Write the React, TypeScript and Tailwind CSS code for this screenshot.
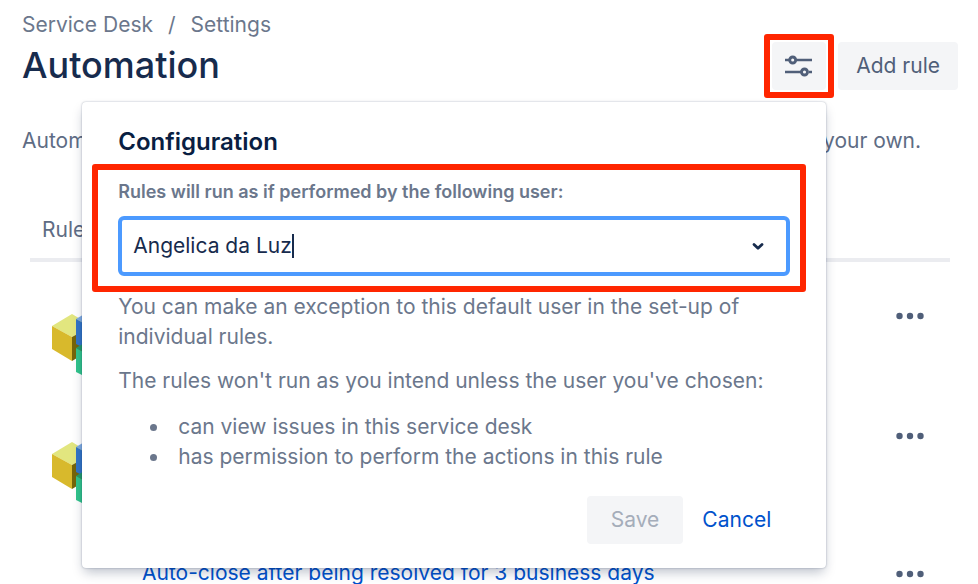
import { useState } from 'react';
import { clsx } from 'clsx';

interface Rule {
  name: string;
  iconCell: string;
  menuCell: string;
}

const rules: Rule[] = [
  { name: 'Transition on comment', iconCell: 'h-32 pt-11', menuCell: 'pt-10' },
  { name: 'Re-open on customer reply', iconCell: 'h-32 pt-[46px]', menuCell: 'pt-[34px]' },
  { name: 'Auto-close after being resolved for 3 business days', iconCell: 'h-32 pt-20', menuCell: 'pt-11' },
];

const CubesIcon = () => (
  <svg width="66" height="76" viewBox="0 0 66 76" aria-hidden="true">
    <path d="M0 20 20 8 40 20 20 31Z" fill="#e2e67f" />
    <path d="M0 20 20 31V55L0 43Z" fill="#d8b92c" />
    <path d="M20 31 40 20V43L20 55Z" fill="#75650b" />
    <path d="M24 13 44 1 64 13 44 24Z" fill="#7eabe3" />
    <path d="M24 13 44 24V48L24 38Z" fill="#3274c6" />
    <path d="M44 24 64 13V37L44 48Z" fill="#164a8e" />
    <path d="M24 42 34 36 44 48 44 53Z" fill="#229a6c" />
    <path d="M24 42 44 53V76L24 66Z" fill="#31c48b" />
    <path d="M44 53 64 42V66L44 76Z" fill="#17764f" />
  </svg>
);

const SlidersIcon = () => (
  <svg width="28" height="22" viewBox="0 0 28 22" fill="none" stroke="currentColor" aria-hidden="true">
    <path d="M0 5H4M12 5H27M0 17H16M24 17H27" strokeWidth="2.6" />
    <circle cx="7.7" cy="5" r="3" strokeWidth="2.9" />
    <circle cx="19.5" cy="17" r="3" strokeWidth="2.9" />
  </svg>
);

const MoreIcon = () => (
  <svg width="28" height="8" viewBox="0 0 28 8" fill="currentColor" aria-hidden="true">
    <circle cx="3.5" cy="4" r="3.2" />
    <circle cx="14" cy="4" r="3.2" />
    <circle cx="24.5" cy="4" r="3.2" />
  </svg>
);

const ConfigurationDialog = () => {
  const [user, setUser] = useState('Angelica da Luz');

  return (
    <div
      role="dialog"
      aria-labelledby="config-title"
      className="absolute top-[60px] right-0 z-10 w-[744px] rounded bg-white px-9 py-6 text-[#6b778c] shadow-[0_0_2px_rgba(9,30,66,0.35),0_6px_12px_-2px_rgba(9,30,66,0.28)]"
    >
      <h2 id="config-title" className="text-2xl leading-8 font-semibold text-[#091e42]">
        Configuration
      </h2>
      <div className="mt-[6px] -mr-4 -ml-[26px] rounded-[3px] border-[6px] border-[#ff2600] pt-[10px] pr-[10px] pb-[10px] pl-5">
        <label htmlFor="run-as" className="block text-lg leading-6 font-semibold">
          Rules will run as if performed by the following user:
        </label>
        <div className="mt-3 flex h-[60px] items-center rounded-md border-4 border-[#4c9aff] bg-white pr-5 pl-[11px] text-[#172b4d]">
          <input
            id="run-as"
            value={user}
            onChange={(e) => setUser(e.target.value)}
            className="field-sizing-content bg-transparent outline-none"
          />
          <span className="h-6 w-0.5 bg-[#172b4d]" />
          <button type="button" aria-label="Show users" className="ml-auto">
            <svg width="16" height="16" viewBox="0 0 16 16" fill="none" stroke="currentColor" aria-hidden="true">
              <path d="M4 6.5 8 10.3 12 6.5" strokeWidth="2.8" strokeLinecap="round" strokeLinejoin="round" />
            </svg>
          </button>
        </div>
      </div>
      <p>You can make an exception to this default user in the set-up of individual rules.</p>
      <p className="mt-[14px]">The rules won't run as you intend unless the user you've chosen:</p>
      <ul className="mt-4 list-disc pl-[52px]">
        <li className="pl-2">can view issues in this service desk</li>
        <li className="pl-2">has permission to perform the actions in this rule</li>
      </ul>
      <div className="mt-6 flex justify-end">
        <button type="button" disabled className="h-12 rounded bg-[#f4f5f7] px-6 text-[#a5adba]">
          Save
        </button>
        <button type="button" className="h-12 px-[19px] text-[#0052cc]">
          Cancel
        </button>
      </div>
    </div>
  );
};

export default function App() {
  return (
    <div className="h-screen overflow-hidden bg-white pt-[10px] pr-5 pl-[22px] font-['Inter',sans-serif] text-[21px] leading-[30px] text-[#5e6c84]">
      <header className="flex items-start justify-between">
        <div>
          <nav aria-label="Breadcrumb" className="flex gap-[15px] text-[#6b778c]">
            <a href="#desk">Service Desk</a>
            <span>/</span>
            <a href="#settings">Settings</a>
          </nav>
          <h1 className="mt-[3px] text-4xl leading-11 font-medium text-[#172b4d]">Automation</h1>
        </div>
        <div className="mt-8 flex gap-3 text-[#505f79]">
          <div className="relative">
            <button
              type="button"
              aria-label="Configuration"
              className="flex h-12 w-[54px] items-center justify-center rounded bg-[#f4f5f7]"
            >
              <SlidersIcon />
            </button>
            <div className="pointer-events-none absolute -inset-2 rounded-[3px] border-[6px] border-[#ff2600]" />
            <ConfigurationDialog />
          </div>
          <button type="button" className="h-12 rounded bg-[#f4f5f7] px-[18px]">
            Add rule
          </button>
        </div>
      </header>

      <p className="mt-9 whitespace-nowrap">
        Automate actions in your service desk. Edit any one of the preset rules or create your own.
      </p>

      <div className="mt-[59px] pr-2 pl-2">
        <table className="w-full text-left">
          <thead>
            <tr className="border-b-4 border-[#ebecf0]">
              <th colSpan={3} className="pb-[13px] pl-3 font-normal">
                Rules
              </th>
            </tr>
          </thead>
          <tbody>
            {rules.map((rule) => (
              <tr key={rule.name} className="align-top">
                <td className={clsx('w-[112px] pl-[22px]', rule.iconCell)}>
                  <CubesIcon />
                </td>
                <td className="pt-[42px]">
                  <a href="#rule" className="text-[#0052cc]">
                    {rule.name}
                  </a>
                </td>
                <td className={clsx('w-[54px]', rule.menuCell)}>
                  <button type="button" aria-label="More actions" className="flex h-7 items-center text-[#505f79]">
                    <MoreIcon />
                  </button>
                </td>
              </tr>
            ))}
          </tbody>
        </table>
      </div>
    </div>
  );
}
